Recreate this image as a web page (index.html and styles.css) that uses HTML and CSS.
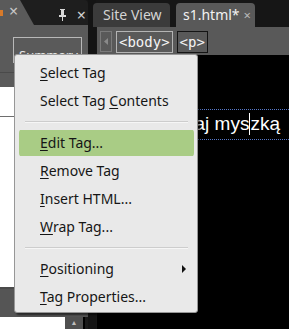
FILE: index.html
```html
<!DOCTYPE html>
<html>
<head>
<meta charset="utf-8">
<link rel="stylesheet" href="styles.css">
</head>
<body>
<div class="app">
  <aside class="side">
    <div class="side-head">
      <div class="side-tab"><span class="tab-icon"></span><span class="tab-x">×</span></div>
      <div class="head-tools">
        <svg class="pin" width="9" height="12" viewBox="0 0 9 12"><path d="M2 0h5v1H6v5h2v2H5v4H4V8H1V6h2V1H2z" fill="#d8d8d8"/></svg>
        <span class="head-x">×</span>
      </div>
    </div>
    <div class="side-tools">
      <div class="summary">Summary</div>
    </div>
    <div class="side-tools2"></div>
    <div class="side-list">
      <div class="list-head"></div>
    </div>
    <div class="side-foot"></div>
    <div class="side-bottom">
      <div class="bottom-white"></div>
      <div class="vscroll"><span class="up">▲</span></div>
      <div class="vedge"></div>
    </div>
  </aside>
  <div class="gutter"></div>
  <main class="doc">
    <div class="tabs">
      <div class="tab">Site View</div>
      <div class="tab active">s1.html*<span class="tx">×</span></div>
    </div>
    <div class="tagbar">
      <span class="scroll-left"><svg width="4" height="7" viewBox="0 0 4 7"><path d="M4 0v7L0 3.5z" fill="#8a8a8a"/></svg></span>
      <span class="tagbtn body-tag">&lt;body&gt;</span>
      <span class="tagbtn p-tag">&lt;p&gt;</span>
    </div>
    <div class="editor">
      <p class="para">Najeżdżaj mys<span class="caret"></span>zką</p>
    </div>
  </main>

  <div class="menu">
    <div class="item"><u>S</u>elect Tag</div>
    <div class="item">Select Tag <u>C</u>ontents</div>
    <div class="sep"></div>
    <div class="item hover"><u>E</u>dit Tag...</div>
    <div class="item"><u>R</u>emove Tag</div>
    <div class="item"><u>I</u>nsert HTML...</div>
    <div class="item"><u>W</u>rap Tag...</div>
    <div class="sep"></div>
    <div class="item sub"><u>P</u>ositioning<span class="arrow"></span></div>
    <div class="item"><u>T</u>ag Properties...</div>
  </div>
</div>
</body>
</html>
```
FILE: styles.css
```css
* { box-sizing: border-box; }
html, body { margin: 0; padding: 0; }
body {
  width: 289px;
  height: 329px;
  overflow: hidden;
  background: #000;
  font-family: "Noto Sans", "Open Sans", sans-serif;
}
.app {
  position: relative;
  display: grid;
  grid-template-columns: 88px 8px 1fr;
  height: 329px;
  background: #161616;
}

/* left panel */
.side {
  display: flex;
  flex-direction: column;
  height: 329px;
}
.side-head {
  height: 25px;
  display: flex;
  background: #1e1e1e;
  border-top-right-radius: 4px;
}
.side-tab {
  width: 34px;
  background: #5a5a5a;
  clip-path: polygon(0 0, 20px 0, 34px 25px, 0 25px);
  display: flex;
  align-items: center;
  padding-left: 0;
}
.tab-icon {
  width: 3px;
  height: 6px;
  background: #d87a2a;
  margin-right: 6px;
}
.tab-x {
  color: #c8c8c8;
  font-size: 16px;
  line-height: 1;
  margin-top: -3px;
}
.head-tools {
  flex: 1;
  display: flex;
  justify-content: flex-end;
  align-items: center;
  gap: 10px;
  padding-right: 2px;
  padding-top: 4px;
}
.head-x {
  color: #d0d0d0;
  font-size: 16px;
  line-height: 1;
}
.side-tools {
  height: 48px;
  background: #5a5a5a;
  padding: 12px 6px 0 13px;
  border-bottom: 1px solid #4a4a4a;
}
.summary {
  width: 69px;
  height: 26px;
  border: 1px solid #b8b8b8;
  color: #e6e6e6;
  font-size: 13px;
  padding-left: 5px;
  padding-top: 4px;
  line-height: 26px;
  white-space: nowrap;
}
.side-tools2 {
  height: 14px;
  background: #5a5a5a;
}
.side-list {
  flex: 1;
  background: #fff;
  padding-top: 29px;
}
.list-head {
  height: 1px;
  background: #6e6e6e;
}
.side-foot {
  height: 30px;
  background: #555;
  border-top: 2px solid #4a4a4a;
}
.side-bottom {
  height: 12px;
  display: flex;
}
.bottom-white { width: 65px; background: #fff; }
.vscroll {
  width: 18px;
  background: #4f4f4f;
  text-align: center;
  color: #bdbdbd;
  font-size: 7px;
  line-height: 12px;
}
.vedge { flex: 1; background: #1a1a1a; border-left: 2px solid #000; }

.gutter { background: #141414; }

/* document */
.doc {
  display: flex;
  flex-direction: column;
  margin-left: 1px;
}
.tabs {
  height: 27px;
  display: flex;
  align-items: flex-end;
  gap: 6px;
  margin-left: -4px;
}
.tab {
  height: 24px;
  padding: 0 0 0 10px;
  background: #3b3b3b;
  color: #d4d4d4;
  font-size: 14px;
  line-height: 23px;
  border-radius: 4px 4px 0 0;
  width: 77px;
  white-space: nowrap;
}
.tab.active {
  background: #595959;
  color: #f2f2f2;
  width: 79px;
  padding-left: 7px;
}
.tx {
  color: #b8b8b8;
  font-size: 13px;
  margin-left: 4px;
}
.tagbar {
  height: 28px;
  background: #595959;
  display: flex;
  align-items: center;
  gap: 4px;
  padding-left: 3px;
  padding-top: 1px;
}
.scroll-left {
  width: 12px;
  height: 21px;
  border: 1px solid #7a7a7a;
  display: flex;
  align-items: center;
  justify-content: center;
}
.tagbtn {
  height: 22px;
  color: #f4f4f4;
  font-family: "DejaVu Sans Mono", "Liberation Mono", monospace;
  font-size: 14px;
  line-height: 20px;
  padding: 0 2px;
  border: 1px solid #b4b4b4;
}
.p-tag { border-color: #141414; }

.editor {
  flex: 1;
  background: #000;
  padding-top: 54px;
}
.para {
  margin: 0;
  height: 31px;
  border-top: 1px dotted #5677c8;
  border-bottom: 1px dotted #5677c8;
  color: #fff;
  font-family: "Liberation Sans", Arial, sans-serif;
  font-size: 19px;
  line-height: 28px;
  text-align: right;
  padding-right: 9px;
  white-space: nowrap;
}
.caret {
  display: inline-block;
  width: 1px;
  height: 22px;
  background: #fff;
  vertical-align: -5px;
}

/* context menu */
.menu {
  position: absolute;
  left: 14px;
  top: 54px;
  width: 184px;
  height: 259px;
  background: #e9e9e9;
  border: 1px solid #979797;
  border-radius: 3px;
  box-shadow: 2px 2px 2px rgba(0,0,0,0.55);
  padding: 4px 3px 0 4px;
  color: #161616;
  font-size: 14px;
}
.item {
  height: 28px;
  line-height: 28px;
  padding-left: 21px;
  position: relative;
  white-space: nowrap;
}
.item u { text-decoration-thickness: 1px; text-underline-offset: 2px; }
.item.hover {
  background: linear-gradient(#a9cc85, #a9cc85) 0 1px / 100% 26px no-repeat;
  border-radius: 4px;
}
.sep {
  height: 14px;
  position: relative;
}
.sep::after {
  content: "";
  position: absolute;
  left: 6px;
  right: 6px;
  top: 6px;
  height: 1px;
  background: #cdcdcd;
  border-bottom: 1px solid #f6f6f6;
}
.arrow {
  position: absolute;
  right: 8px;
  top: 10px;
  width: 0;
  height: 0;
  border-left: 4px solid #111;
  border-top: 4px solid transparent;
  border-bottom: 4px solid transparent;
}
```
